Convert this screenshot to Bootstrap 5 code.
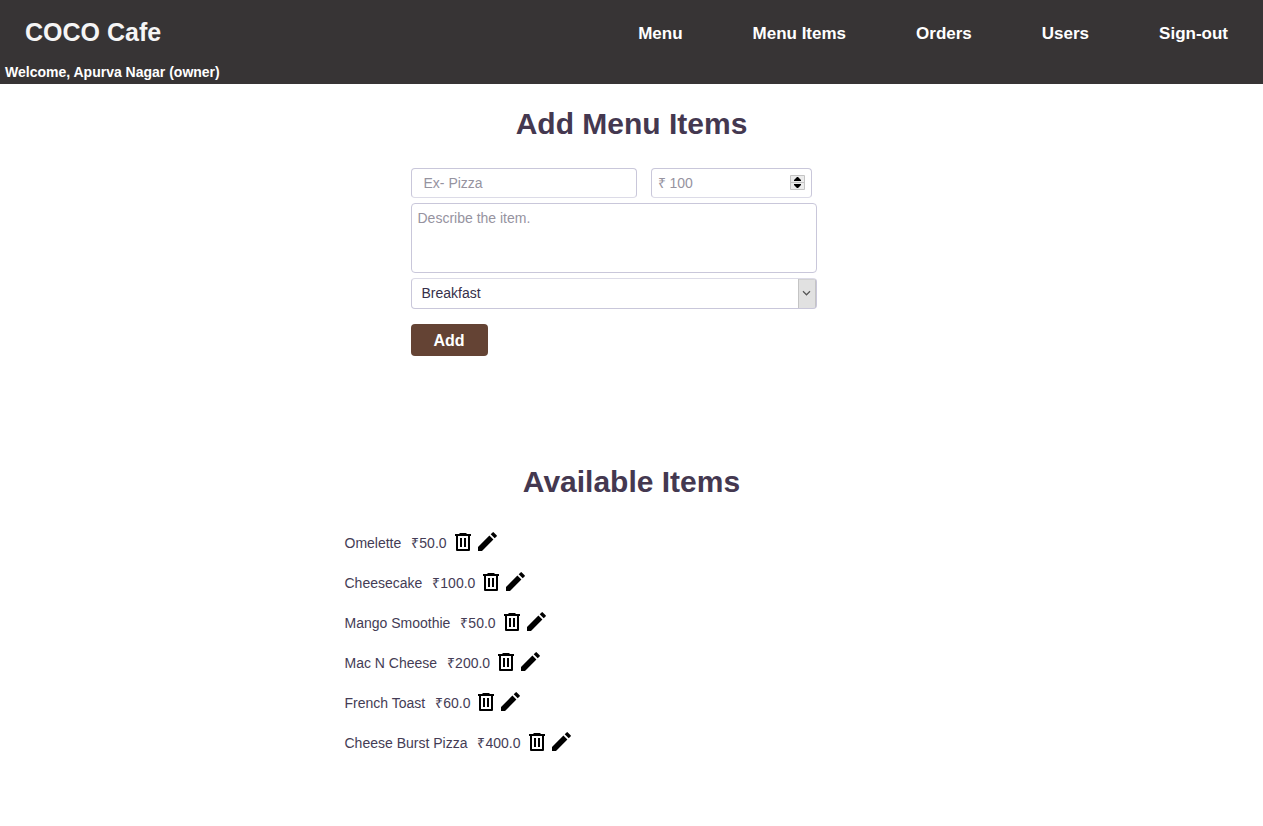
<!DOCTYPE html>
<html lang="en">
<head>
<meta charset="utf-8">
<meta name="viewport" content="width=device-width, initial-scale=1">
<title>COCO Cafe</title>
<link href="https://cdn.jsdelivr.net/npm/bootstrap@5.3.0/dist/css/bootstrap.min.css" rel="stylesheet">
<style>
  body { font-family: "Liberation Sans", Arial, sans-serif; font-size: 14px; line-height: 20px; color: #443c55; background: #fff; }
  .site-header { background: #373435; color: #fff; }
  .site-header a { color: #fff; text-decoration: none; font-weight: bold; }
  .site-header .brand { font-size: 25px; line-height: 30px; color: #f5f5f5; }
  .site-nav { font-size: 17px; line-height: 26px; padding-top: 4px; column-gap: 70px; row-gap: 8px; }
  .top-row { padding: 17px 35px 15px 25px; }
  .welcome { padding: 0 5px 2px; }
  .section-title { font-size: 30px; line-height: 40px; font-weight: bold; color: #443850; }
  .item-form { max-width: 442px; }
  .field-stack { max-width: 406px; row-gap: 5px; }
  .item-form .form-control, .item-form .form-select {
    font-size: 14px; line-height: 20px; color: #36304a; border: 1px solid #c9c7da; border-radius: 4px; box-shadow: none; }
  .item-form .form-control::placeholder { color: #96939f; opacity: 1; }
  .item-form .short { height: 30px; padding: 4px 12px; border-bottom-color: #dcdbe7; }
  .item-form .price { padding-left: 6px; appearance: textfield; -moz-appearance: textfield; }
  .price::-webkit-inner-spin-button { -webkit-appearance: none; }
  .two-up { gap: 14px; padding-right: 5px; }
  .price-cell { flex: 0 0 161px; }
  .spinner { top: 7px; right: 7px; pointer-events: none; }
  .item-form textarea { height: 70px; padding: 4px 6px; resize: none; }
  .item-form .form-select {
    height: 31px; padding: 3px 28px 5px 10px; border-top-color: #dcdbe7;
    background: #fff url("data:image/svg+xml,%3Csvg xmlns='http://www.w3.org/2000/svg' width='18' height='30'%3E%3Cpath fill='%23e1e1e1' d='M0 0h18v30H0z'/%3E%3Cpath fill='none' stroke='%23c4c4c4' d='M.5 0v30M17.5 0v30M0 .5h18'/%3E%3Cpath fill='none' stroke='%23555' stroke-width='1.2' d='M5 12.500l3.500 3.500 3.500-3.500'/%3E%3C/svg%3E") no-repeat right center / 18px 30px; }
  .btn-add { width: 77px; height: 32px; margin-top: 15px; padding: 1px 0 0; font-size: 16px; line-height: 24px; font-weight: bold; background: #644334; color: #fff; border: 0; border-radius: 4px; }
  .btn-add:hover { background: #523529; color: #fff; }
  .available { margin-top: 106px; }
  .item-list { max-width: 574px; margin-top: 21px; }
  .item-list li { height: 40px; gap: 10px; }
  .item-actions { gap: 7px; margin: 0 0 2px -2px; }
  .icon-btn { display: block; padding: 0; border: 0; background: none; color: #000; }
  .icon-btn svg { display: block; }
</style>
</head>
<body>
<svg width="0" height="0" class="position-absolute" aria-hidden="true">
  <symbol id="trash" viewBox="0 0 16 20">
    <path fill="currentColor" d="M0 2h4.500V1h7v1H16v2h-1v14q0 1-1 1H2q-1 0-1-1V4H0zM3 4v13h10V4zM5 6h2v9H5zM9 6h2v9H9z" fill-rule="evenodd"/>
  </symbol>
  <symbol id="pencil" viewBox="0 0 20 20">
    <path fill="currentColor" d="M0 15L11.400 3.600l4 4L4 19H0zM12.700 2.300L14.600.4q.6-.6 1.200 0l2.800 2.800q.6.600 0 1.200L16.700 6.300z"/>
  </symbol>
</svg>

<header class="site-header">
  <div class="top-row d-flex flex-wrap align-items-center justify-content-between">
    <a class="brand" href="#">COCO Cafe</a>
    <nav class="site-nav d-flex flex-wrap" aria-label="Main">
      <a href="#">Menu</a>
      <a href="#">Menu Items</a>
      <a href="#">Orders</a>
      <a href="#">Users</a>
      <a href="#">Sign-out</a>
    </nav>
  </div>
  <div class="welcome fw-bold">Welcome, Apurva Nagar (owner)</div>
</header>

<main class="pb-5">
  <section class="pt-1">
    <h1 class="section-title text-center mb-4 mt-3">Add Menu Items</h1>
    <form class="item-form mx-auto">
      <div class="field-stack d-flex flex-column">
        <div class="two-up d-flex">
          <div class="flex-grow-1">
            <input class="form-control short" type="text" placeholder="Ex- Pizza" aria-label="Item name">
          </div>
          <div class="price-cell position-relative">
            <input class="form-control short price" type="number" placeholder="₹ 100" aria-label="Price">
            <svg class="spinner position-absolute" width="15" height="15" viewBox="0 0 15 15" aria-hidden="true">
              <path fill="#ececec" stroke="#c4c4c4" d="M.5.500h14v14H.500zM.500 7.500h14"/>
              <path d="M7 2h1l3 3v1H4V5zM4 9h7v1l-3 3H7l-3-3z"/>
            </svg>
          </div>
        </div>
        <textarea class="form-control" placeholder="Describe the item." aria-label="Description"></textarea>
        <select class="form-select" aria-label="Category"><option>Breakfast</option></select>
      </div>
      <button class="btn btn-add" type="submit">Add</button>
    </form>
  </section>

  <section class="available">
    <h2 class="section-title text-center mb-0">Available Items</h2>
    <ul class="item-list list-unstyled mx-auto mb-0">
      <li class="d-flex align-items-center"><span>Omelette</span><span>₹50.0</span>
        <span class="item-actions d-flex"><button class="icon-btn" type="button" aria-label="Delete"><svg width="16" height="20"><use href="#trash"/></svg></button><button class="icon-btn" type="button" aria-label="Edit"><svg width="20" height="20"><use href="#pencil"/></svg></button></span></li>
      <li class="d-flex align-items-center"><span>Cheesecake</span><span>₹100.0</span>
        <span class="item-actions d-flex"><button class="icon-btn" type="button" aria-label="Delete"><svg width="16" height="20"><use href="#trash"/></svg></button><button class="icon-btn" type="button" aria-label="Edit"><svg width="20" height="20"><use href="#pencil"/></svg></button></span></li>
      <li class="d-flex align-items-center"><span>Mango Smoothie</span><span>₹50.0</span>
        <span class="item-actions d-flex"><button class="icon-btn" type="button" aria-label="Delete"><svg width="16" height="20"><use href="#trash"/></svg></button><button class="icon-btn" type="button" aria-label="Edit"><svg width="20" height="20"><use href="#pencil"/></svg></button></span></li>
      <li class="d-flex align-items-center"><span>Mac N Cheese</span><span>₹200.0</span>
        <span class="item-actions d-flex"><button class="icon-btn" type="button" aria-label="Delete"><svg width="16" height="20"><use href="#trash"/></svg></button><button class="icon-btn" type="button" aria-label="Edit"><svg width="20" height="20"><use href="#pencil"/></svg></button></span></li>
      <li class="d-flex align-items-center"><span>French Toast</span><span>₹60.0</span>
        <span class="item-actions d-flex"><button class="icon-btn" type="button" aria-label="Delete"><svg width="16" height="20"><use href="#trash"/></svg></button><button class="icon-btn" type="button" aria-label="Edit"><svg width="20" height="20"><use href="#pencil"/></svg></button></span></li>
      <li class="d-flex align-items-center"><span>Cheese Burst Pizza</span><span>₹400.0</span>
        <span class="item-actions d-flex"><button class="icon-btn" type="button" aria-label="Delete"><svg width="16" height="20"><use href="#trash"/></svg></button><button class="icon-btn" type="button" aria-label="Edit"><svg width="20" height="20"><use href="#pencil"/></svg></button></span></li>
    </ul>
  </section>
</main>
<script src="https://cdn.jsdelivr.net/npm/bootstrap@5.3.0/dist/js/bootstrap.bundle.min.js"></script>
</body>
</html>
